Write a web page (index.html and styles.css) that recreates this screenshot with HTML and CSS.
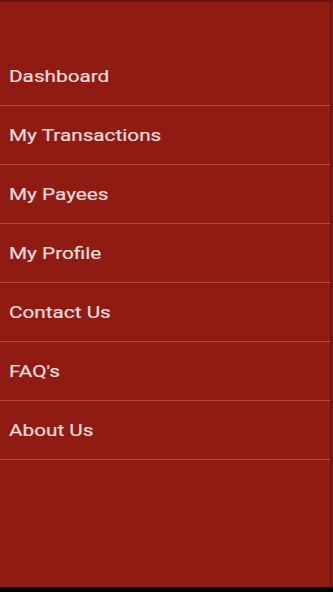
FILE: index.html
```html
<!DOCTYPE html>
<html lang="en">
<head>
<meta charset="utf-8">
<title>Menu</title>
<link rel="stylesheet" href="styles.css">
</head>
<body>
<div class="screen">
  <nav class="drawer">
    <div class="drawer-head"></div>
    <ul class="menu">
      <li class="menu-item"><span class="label">Dashboard</span></li>
      <li class="menu-item"><span class="label">My Transactions</span></li>
      <li class="menu-item"><span class="label">My Payees</span></li>
      <li class="menu-item"><span class="label">My Profile</span></li>
      <li class="menu-item"><span class="label">Contact Us</span></li>
      <li class="menu-item"><span class="label">FAQ's</span></li>
      <li class="menu-item"><span class="label">About Us</span></li>
    </ul>
  </nav>
  <div class="edge"></div>
</div>
<div class="navbar"></div>
</body>
</html>
```
FILE: styles.css
```css
html, body {
  margin: 0;
  padding: 0;
  width: 333px;
  height: 592px;
  overflow: hidden;
  background: #000;
}
.screen {
  display: flex;
  height: 587px;
  background: #8f1b13;
  border-top: 2px solid #6e140e;
  box-sizing: border-box;
}
.drawer {
  flex: 1;
  background: #8f1b13;
}
.drawer-head {
  height: 45px;
}
.menu {
  list-style: none;
  margin: 0;
  padding: 0;
}
.menu-item {
  height: 58px;
  border-bottom: 1px solid #b04a40;
  display: flex;
  align-items: center;
  padding-left: 9px;
  font-family: Roboto, "Noto Sans", sans-serif;
  font-size: 17px;
  font-weight: 400;
  color: #f2dede;
  -webkit-text-stroke: 0.2px #f2dede;
}
.label {
  display: inline-block;
  transform: scaleX(1.22);
  transform-origin: left center;
}
.edge {
  width: 2px;
  background: #7a1a12;
  border-left: 1px solid #6a130d;
}
.navbar {
  height: 5px;
  background: #000;
}
```
